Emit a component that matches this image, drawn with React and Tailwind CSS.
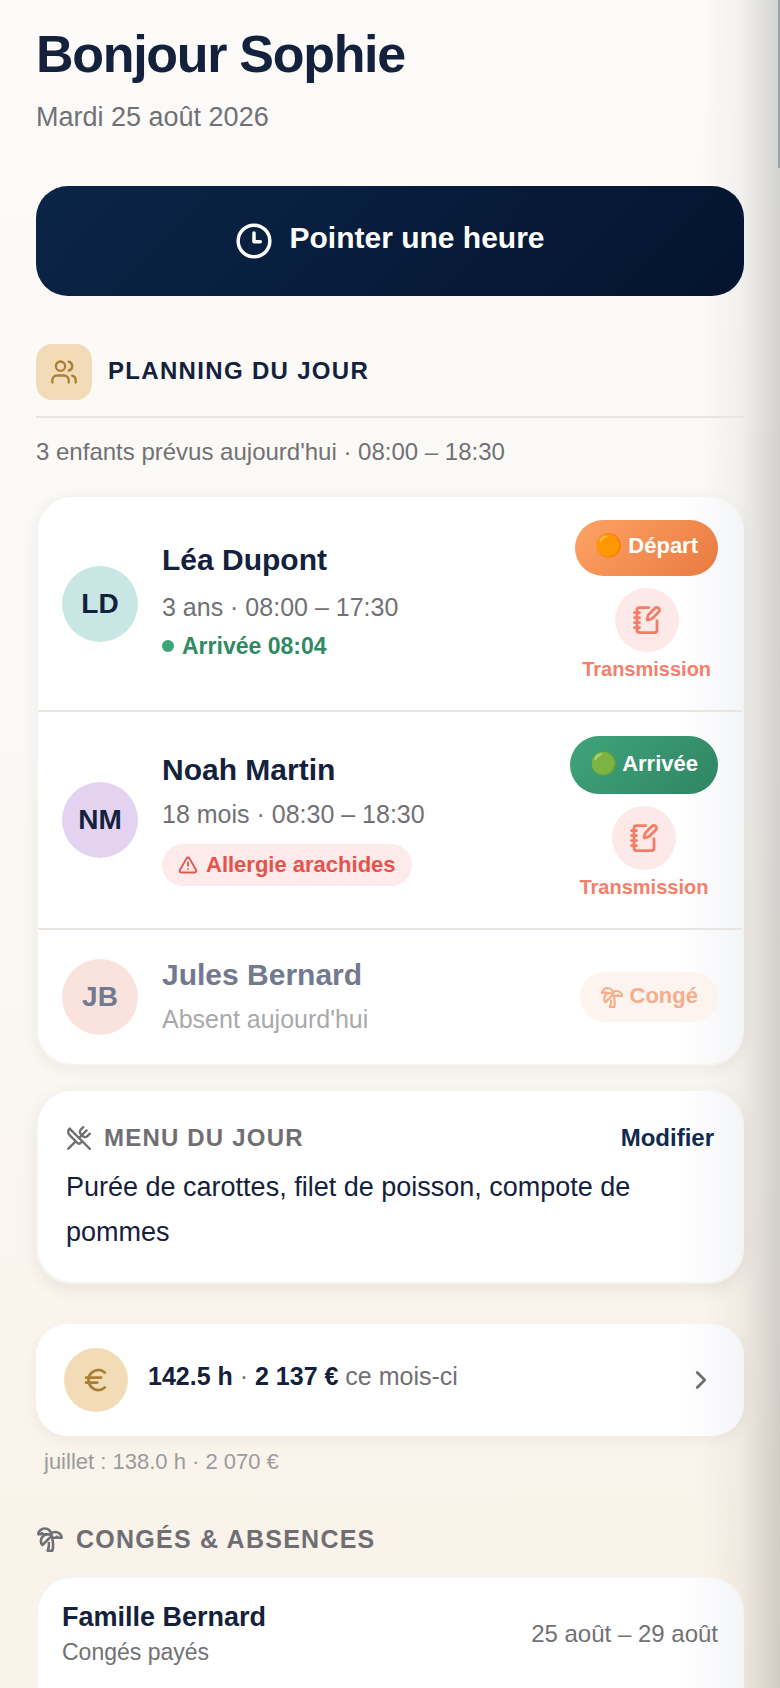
import { Users, NotebookPen, TriangleAlert, TreePalm, UtensilsCrossed, Euro, ChevronRight } from 'lucide-react';

const cardFade = 'bg-[linear-gradient(90deg,#ffffff_91%,#f4f5f8_100%)]';

function Transmission() {
  return (
    <div className="flex flex-col items-center">
      <div className="w-16 h-16 rounded-full bg-[#fde9e7] flex items-center justify-center text-[#f47c66]">
        <NotebookPen size={30} strokeWidth={2.2} />
      </div>
      <span className="mt-[1px] text-[20px] leading-[32px] font-bold text-[#f4806c]">Transmission</span>
    </div>
  );
}

export default function App() {
  return (
    <div className="relative h-[1688px] overflow-hidden bg-[linear-gradient(180deg,#fcfbf9_0%,#fbf9f6_40%,#f9f2e8_100%)] font-['Liberation_Sans',Arial,sans-serif]">
      {/* right edge fade + scrollbar sit behind/over the page */}
      <div className="absolute top-0 right-0 bottom-0 w-[80px] bg-[linear-gradient(90deg,rgba(0,0,0,0)_0%,rgba(0,0,0,0.04)_50%,rgba(0,0,0,0.16)_100%)]" />
      <div className="absolute top-0 right-0 w-[2px] h-[168px] bg-[#9aa0ad]" />

      <div className="relative px-9 pt-[24px]">
        <h1 className="text-[52px] leading-[60px] font-bold tracking-[-0.025em] text-[#14213d]">Bonjour Sophie</h1>
        <p className="mt-[17px] text-[27px] leading-[32px] text-[#717175]">Mardi 25 août 2026</p>

        <button className="mt-[53px] w-full h-[110px] rounded-[32px] bg-[linear-gradient(135deg,#0b2547_0%,#04142f_100%)] flex items-center justify-center gap-[16px] text-white">
          <svg width="38" height="38" viewBox="0 0 24 24" fill="none" stroke="currentColor" strokeWidth="2.2" strokeLinecap="round" strokeLinejoin="round">
            <circle cx="12" cy="12" r="10" />
            <polyline points="12 7 12 12.5 16 12.5" />
          </svg>
          <span className="text-[30px] leading-[38px] font-bold -mt-[6px]">Pointer une heure</span>
        </button>

        <div className="mt-[48px] flex items-center gap-4">
          <div className="w-14 h-14 rounded-[16px] bg-[#f2dcb8] flex items-center justify-center text-[#a87f35]">
            <Users size={28} strokeWidth={2} />
          </div>
          <h2 className="-mt-[3px] text-[24px] leading-[32px] font-bold tracking-[0.055em] text-[#14213d]">PLANNING DU JOUR</h2>
        </div>
        <div className="mt-[16px] h-[2px] bg-[#e9e5df]" />
        <p className="mt-[18px] text-[24px] leading-[32px] text-[#717175]">3 enfants prévus aujourd'hui · 08:00 – 18:30</p>

        <div className={`mt-[27px] rounded-[36px] border-2 border-[#f5f3f0] shadow-[0_4px_16px_rgba(0,0,0,0.06)] overflow-hidden ${cardFade}`}>
          <div className="h-[215px] px-6 flex items-center justify-between border-b-2 border-[#e9e6e1]">
            <div className="flex items-center gap-6">
              <div className="w-[76px] h-[76px] rounded-full bg-[#c8e6e3] flex items-center justify-center text-[28px] font-bold text-[#14213d]">LD</div>
              <div className="-mt-[3px]">
                <div className="text-[30px] leading-[40px] font-bold text-[#14213d]">Léa Dupont</div>
                <div className="mt-[9px] text-[25px] leading-[36px] text-[#717175]">3 ans · 08:00 – 17:30</div>
                <div className="mt-[3px] flex items-center gap-[8px] text-[23px] leading-[36px] font-bold text-[#2f8a63]">
                  <span className="w-3 h-3 rounded-full bg-[#3fa47a]" />
                  Arrivée 08:04
                </div>
              </div>
            </div>
            <div className="-mt-[3px] flex flex-col items-center gap-3">
              <button className="h-14 px-[20px] pb-[4px] rounded-full bg-[linear-gradient(135deg,#ffa366_0%,#e87a40_100%)] text-white text-[22px] font-bold">🟠 Départ</button>
              <Transmission />
            </div>
          </div>

          <div className="h-[218px] px-6 flex items-center justify-between border-b-2 border-[#e9e6e1]">
            <div className="flex items-center gap-6">
              <div className="w-[76px] h-[76px] rounded-full bg-[#e3d3f1] flex items-center justify-center text-[28px] font-bold text-[#14213d]">NM</div>
              <div className="-mt-[5px]">
                <div className="text-[30px] leading-[40px] font-bold text-[#14213d]">Noah Martin</div>
                <div className="mt-[6px] text-[25px] leading-[36px] text-[#717175]">18 mois · 08:30 – 18:30</div>
                <div className="mt-[12px] w-fit h-[42px] px-[16px] rounded-full bg-[#fdeaea] flex items-center gap-[8px] text-[22px] font-bold text-[#e5534b]">
                  <TriangleAlert size={20} strokeWidth={2.2} />
                  Allergie arachides
                </div>
              </div>
            </div>
            <div className="-mt-[1px] flex flex-col items-center gap-3">
              <button className="h-[58px] px-[20px] pb-[4px] rounded-full bg-[linear-gradient(135deg,#3fa47a_0%,#2f8563_100%)] text-white text-[22px] font-bold">🟢 Arrivée</button>
              <Transmission />
            </div>
          </div>

          <div className="h-[134px] px-6 flex items-center justify-between">
            <div className="flex items-center gap-6">
              <div className="w-[76px] h-[76px] rounded-full bg-[#fae3dc] flex items-center justify-center text-[28px] font-bold text-[#727a8f]">JB</div>
              <div className="-mt-[2px]">
                <div className="text-[30px] leading-[40px] font-bold text-[#727a8f]">Jules Bernard</div>
                <div className="mt-[6px] text-[25px] leading-[36px] text-[#a9a9ac]">Absent aujourd'hui</div>
              </div>
            </div>
            <div className="h-[50px] px-5 pb-[3px] rounded-full bg-[#fdf3ef] flex items-center gap-[6px] text-[22px] font-bold text-[#f4ae8c]">
              <TreePalm size={24} strokeWidth={2.2} className="mt-[3px]" />
              Congé
            </div>
          </div>
        </div>

        <div className={`mt-[23px] rounded-[36px] border-2 border-[#f5f3f0] shadow-[0_6px_18px_rgba(0,0,0,0.07)] px-7 pt-[29px] pb-[27px] ${cardFade}`}>
          <div className="flex items-center justify-between">
            <div className="flex items-center gap-3 text-[24px] leading-[36px] font-bold tracking-[0.05em] text-[#6f6f73]">
              <UtensilsCrossed size={26} strokeWidth={2.2} />
              MENU DU JOUR
            </div>
            <button className="text-[24px] leading-[36px] font-bold text-[#0f2a4f]">Modifier</button>
          </div>
          <p className="mt-[9px] text-[27px] leading-[45px] text-[#14213d]">Purée de carottes, filet de poisson, compote de pommes</p>
        </div>

        <div className={`mt-[40px] h-[112px] rounded-[32px] shadow-[0_4px_14px_rgba(0,0,0,0.05)] pl-7 pr-[28px] flex items-center justify-between ${cardFade}`}>
          <div className="flex items-center gap-5">
            <div className="w-16 h-16 rounded-full bg-[#f2dcb8] flex items-center justify-center text-[#a87f35]">
              <Euro size={30} strokeWidth={2.2} />
            </div>
            <div className="-mt-[7px] text-[25px] text-[#717175]">
              <b className="text-[#14213d]">142.5 h</b> · <b className="text-[#14213d]">2 137 €</b> ce mois-ci
            </div>
          </div>
          <ChevronRight size={30} strokeWidth={2.2} className="text-[#6f6f73]" />
        </div>
        <p className="mt-[11px] pl-2 text-[22px] leading-[30px] text-[#9b9b9d]">juillet : 138.0 h · 2 070 €</p>

        <div className="mt-[44px] flex items-center gap-3 text-[25px] leading-[36px] font-bold tracking-[0.05em] text-[#6f6f73]">
          <TreePalm size={28} strokeWidth={2.2} />
          CONGÉS &amp; ABSENCES
        </div>

        <div className={`mt-[19px] h-[200px] rounded-[36px] border-2 border-[#f5f3f0] px-6 pt-[20px] flex items-start justify-between ${cardFade}`}>
          <div>
            <div className="text-[27px] leading-[38px] font-bold text-[#14213d]">Famille Bernard</div>
            <div className="text-[23px] leading-[32px] text-[#717175]">Congés payés</div>
          </div>
          <div className="mt-[18px] text-[24px] leading-[36px] text-[#717175]">25 août – 29 août</div>
        </div>
      </div>
    </div>
  );
}
